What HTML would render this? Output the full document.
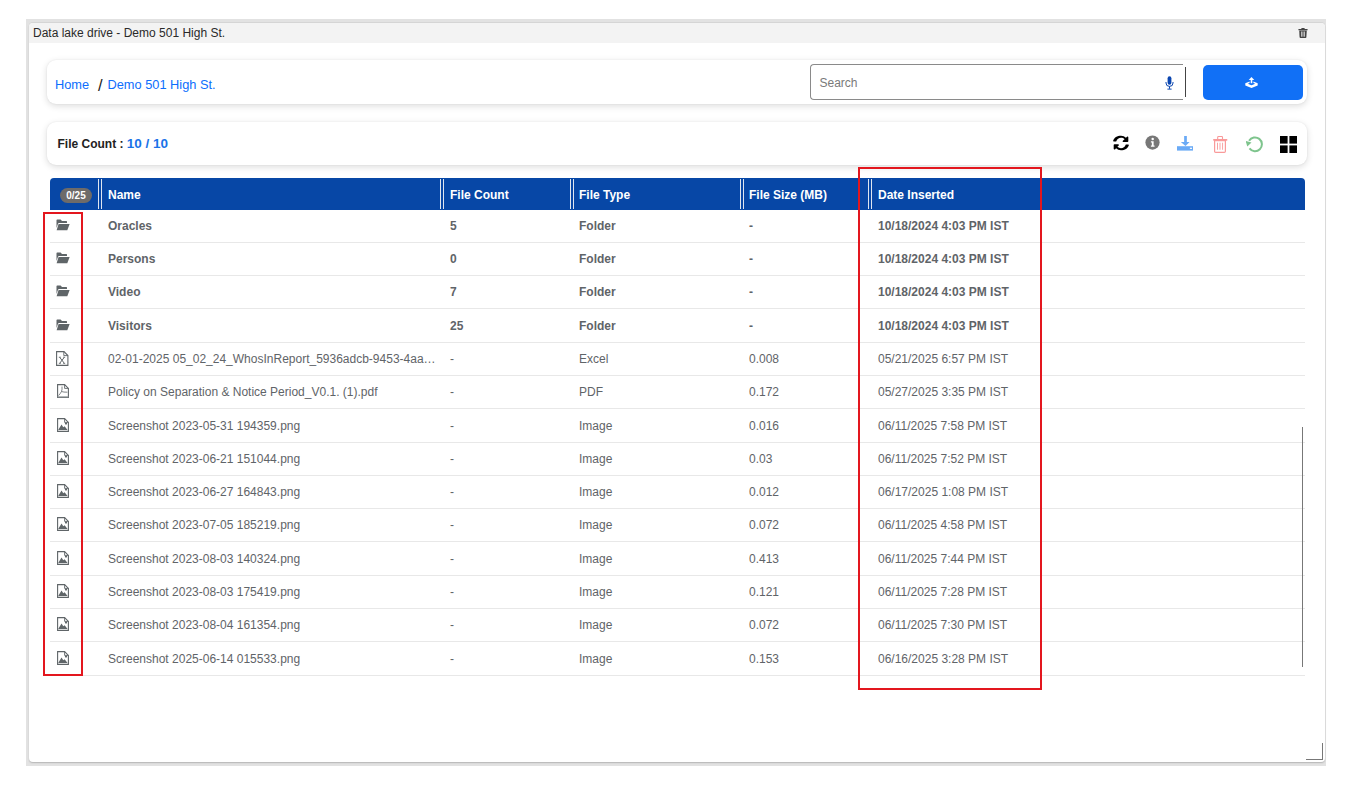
<!DOCTYPE html>
<html><head><meta charset="utf-8">
<style>
*{box-sizing:border-box;margin:0;padding:0}
html,body{width:1364px;height:786px;background:#fff;overflow:hidden;font-family:"Liberation Sans",sans-serif;position:relative}
.frame{position:absolute;left:26px;top:19px;width:1300px;height:747px;background:#e2e2e2}
.panel{position:absolute;left:3px;top:4px;width:1296px;height:739px;background:#fff;border-radius:4px;box-shadow:0 1px 1.5px rgba(0,0,0,.2),0 -1px 0 #d6d6d6}
.ttl{position:absolute;left:0;top:0;width:1296px;height:20px;background:#f3f3f3;border-radius:4px 4px 0 0;font-size:12px;color:#2a2a2a;line-height:21px;padding-left:4px}
.ttl .tr{position:absolute;left:1269px;top:5px}
.card{position:absolute;background:#fff;border-radius:9px;box-shadow:0 2px 7px rgba(0,0,0,.14),0 0 2px rgba(0,0,0,.07)}
.bc{left:47px;top:60px;width:1260px;height:44px}
.bc .t{position:absolute;top:17px;left:8px;font-size:12.8px;color:#0d6efd;white-space:nowrap;line-height:15px}
.bc .t .sl{color:#222;padding:0 5px 0 5.2px;font-size:16.5px;vertical-align:-2px;line-height:10px}
.search{position:absolute;left:763px;top:4px;width:373px;height:36px;border:1px solid #8a8a8a;border-right:none;border-radius:4px 0 0 4px}
.search .ph{position:absolute;left:8.5px;top:11px;font-size:12px;color:#7a7a7a}
.vbar{position:absolute;left:1138px;top:7px;width:1px;height:30px;background:#444}
.upl{position:absolute;left:1156px;top:5px;width:100px;height:35px;background:#1170f6;border-radius:5px}
.fc{left:47px;top:122px;width:1260px;height:43px}
.fc .t{position:absolute;left:10.5px;top:14px;font-size:12px;font-weight:bold;color:#222;white-space:nowrap}
.fc .t span{color:#1a73e8;font-size:13.5px}
.thead{position:absolute;left:50px;top:178px;width:1255px;height:32px;background:#0747a6;border-radius:4px 4px 0 0}
.th{position:absolute;top:0.5px;height:32px;color:#fff;font-weight:bold;font-size:12px;line-height:32px}
.dl{position:absolute;top:1px;width:4px;height:30px;border-left:1.2px solid #dfe6f0;border-right:1.2px solid #dfe6f0;margin-left:1px}
.badge{position:absolute;left:10px;top:9.5px;width:32px;height:15.5px;border-radius:8px;background:#6e6b69;color:#fff;font-size:10px;font-weight:bold;text-align:center;line-height:15.5px}
.row{position:absolute;left:50px;width:1255px;border-bottom:1px solid #e8e8e8}
.row .c{position:absolute;top:0;bottom:0;display:flex;align-items:center;font-size:12px;color:#5f6468;white-space:nowrap;padding-top:0px}
.row.b .c{font-weight:bold}
.row .ic{position:absolute;top:0;bottom:0;display:flex;align-items:center;justify-content:center;padding-bottom:2px}
.red{position:absolute;border:2px solid #e3161e}
.scroll{position:absolute;left:1302px;top:427px;width:1.2px;height:240px;background:#777}
.rz1{position:absolute;left:1322px;top:743px;width:1.2px;height:17px;background:#777}
.rz2{position:absolute;left:1306px;top:759px;width:17px;height:1.2px;background:#777}
</style></head><body>
<div class="frame"><div class="panel">
<div class="ttl">Data lake drive - Demo 501 High St.
<svg class="tr" width="10" height="10" viewBox="0 0 10 10"><rect x="3.3" y="0" width="3.4" height="1.4" rx="0.4" fill="#444"/><rect x="0.4" y="1" width="9.2" height="1.3" rx="0.3" fill="#444"/><path d="M1.2 2.6 H8.8 L8.4 9.2 Q8.3 9.9 7.6 9.9 H2.4 Q1.7 9.9 1.6 9.2 Z" fill="#444"/><rect x="3.3" y="3.5" width="1.1" height="5.2" fill="#f3f3f3"/><rect x="5.6" y="3.5" width="1.1" height="5.2" fill="#f3f3f3"/></svg>
</div>
</div></div>

<div class="card bc">
  <div class="t">Home <span class="sl">/</span>Demo 501 High St.</div>
  <div class="search"><div class="ph">Search</div>
    <svg style="position:absolute;left:354px;top:11px" width="9" height="14" viewBox="0 0 9 14"><rect x="2.6" y="0.3" width="3.8" height="8.4" rx="1.9" fill="#0b46b0"/><path d="M1 6 V7 Q1 10.4 4.5 10.4 Q8 10.4 8 7 V6" fill="none" stroke="#0b46b0" stroke-width="1"/><rect x="4" y="10.3" width="1" height="2.5" fill="#0b46b0"/><rect x="2.4" y="12.6" width="4.2" height="1" fill="#0b46b0"/></svg>
  </div>
  <div class="vbar"></div>
  <div class="upl">
    <svg style="position:absolute;left:42px;top:12px" width="13" height="11" viewBox="0 0 13 11"><path d="M6.5 0 L9.3 2.9 H7.3 V6.2 H5.7 V2.9 H3.7 Z" fill="#fff"/><path d="M4.6 4.6 L0.3 6.3 V8.6 L6.5 11 L12.7 8.6 V6.3 L8.4 4.6 V5.9 L10.2 6.7 L6.5 8.3 L2.8 6.7 L4.6 5.9 Z" fill="#fff"/></svg>
  </div>
</div>

<div class="card fc">
  <div class="t">File Count : <span>10 / 10</span></div>
  <!-- refresh -->
  <svg style="position:absolute;left:1066px;top:13px" width="16" height="16" viewBox="0 0 512 512"><path fill="#000" d="M370.7 133.3C339.5 104 299.9 88 256 88c-68.5 0-128.2 43.7-149.5 108.1-2.7 8.1-10.3 13.9-18.9 13.9H24c-12.4 0-21.8-11.3-19.5-23.5C31.8 86.6 135.1 24 256 24c61.2 0 116.8 24.1 157.6 63.4L449 52c15.1-15.1 41-4.4 41 17v134c0 13.3-10.7 24-24 24H332c-21.4 0-32.1-25.9-17-41l55.7-52.7zM32 296h134c21.4 0 32.1 25.9 17 41l-41.7 41.7C172.5 408 212.1 424 256 424c68.5 0 128.2-43.7 149.5-108.1 2.7-8.1 10.3-13.9 18.9-13.9H488c12.4 0 21.8 11.3 19.5 23.5C480.2 425.4 376.9 488 256 488c-61.2 0-116.8-24.1-157.6-63.4L63 460c-15.1 15.1-41 4.4-41-17V320c0-13.3 10.7-24 24-24z"/></svg>
  <!-- info -->
  <svg style="position:absolute;left:1098px;top:13px" width="15" height="15" viewBox="0 0 16 16"><circle cx="8" cy="8" r="7.6" fill="#777"/><circle cx="8.2" cy="4.2" r="1.3" fill="#fff"/><path d="M6.3 6.6 H9.2 V11.3 H10.2 V12.6 H6.3 V11.3 H7.3 V7.9 H6.3 Z" fill="#fff"/></svg>
  <!-- download -->
  <svg style="position:absolute;left:1130px;top:14px" width="16" height="15" viewBox="0 0 16 15"><path d="M7.15 0 H9.85 V6.1 H12.6 L8.5 9.9 L3.8 6.1 H7.15 Z" fill="#6aaaf6"/><path d="M0 10.2 H16 V14.6 H0 Z" fill="#6aaaf6"/><rect x="12.9" y="11.7" width="2.1" height="1.2" fill="#fff"/></svg>
  <!-- trash -->
  <svg style="position:absolute;left:1166px;top:14px" width="15" height="17" viewBox="0 0 15 17"><path d="M4.7 3 V1.3 Q4.7 0.55 5.45 0.55 H8.75 Q9.5 0.55 9.5 1.3 V3" fill="none" stroke="#f99a9a" stroke-width="1.1"/><rect x="0.1" y="3.1" width="14.3" height="1.6" rx="0.6" fill="#f99a9a"/><path d="M1.6 4.6 H12.4 V15.2 Q12.4 16.3 11.3 16.3 H2.7 Q1.6 16.3 1.6 15.2 Z" fill="none" stroke="#f99a9a" stroke-width="1.2"/><rect x="4.05" y="6.6" width="0.9" height="7.2" rx="0.4" fill="#f99a9a"/><rect x="6.55" y="6.6" width="0.9" height="7.2" rx="0.4" fill="#f99a9a"/><rect x="9.15" y="6.6" width="0.9" height="7.2" rx="0.4" fill="#f99a9a"/></svg>
  <!-- undo -->
  <svg style="position:absolute;left:1199px;top:14px" width="18" height="17" viewBox="0 0 18 17"><path d="M3.09 4.75 A6.9 6.9 0 1 1 3.49 12.45" fill="none" stroke="#7ec48d" stroke-width="2"/><path d="M-0.5 4.8 L5.5 6.5 L1.3 10.4 Z" fill="#7ec48d"/></svg>
  <!-- grid -->
  <svg style="position:absolute;left:1233px;top:14px" width="17" height="17" viewBox="0 0 17 17"><rect x="0" y="0" width="7.6" height="7.6" fill="#000"/><rect x="9.4" y="0" width="7.6" height="7.6" fill="#000"/><rect x="0" y="9.4" width="7.6" height="7.6" fill="#000"/><rect x="9.4" y="9.4" width="7.6" height="7.6" fill="#000"/></svg>
</div>

<div class="thead">
  <div class="badge">0/25</div>
  <div class="dl" style="left:47px"></div>
  <div class="th" style="left:58px">Name</div>
  <div class="dl" style="left:389px"></div>
  <div class="th" style="left:400px">File Count</div>
  <div class="dl" style="left:519px"></div>
  <div class="th" style="left:529px">File Type</div>
  <div class="dl" style="left:689px"></div>
  <div class="th" style="left:699px">File Size (MB)</div>
  <div class="dl" style="left:817px"></div>
  <div class="th" style="left:828px">Date Inserted</div>
</div>

<div class="row b" style="top:210px;height:33px"><div class="ic" style="left:0;width:26px"><svg width="14" height="12" viewBox="0 0 14 12"><path d="M0.5 1.2 Q0.5 0.5 1.2 0.5 L4.6 0.5 L6 2 L10.4 2 Q11 2 11 2.6 L11 4 L3 4 Q2.4 4 2.1 4.6 L0.5 9 Z" fill="#5f6568"/><path d="M2.6 5 L13.6 5 L11.3 11.3 L0.6 11.3 Z" fill="#5f6568"/></svg></div><div class="c" style="left:58px;width:330px">Oracles</div><div class="c" style="left:400px">5</div><div class="c" style="left:529px">Folder</div><div class="c" style="left:699px">-</div><div class="c" style="left:828px">10/18/2024 4:03 PM IST</div></div><div class="row b" style="top:243px;height:33px"><div class="ic" style="left:0;width:26px"><svg width="14" height="12" viewBox="0 0 14 12"><path d="M0.5 1.2 Q0.5 0.5 1.2 0.5 L4.6 0.5 L6 2 L10.4 2 Q11 2 11 2.6 L11 4 L3 4 Q2.4 4 2.1 4.6 L0.5 9 Z" fill="#5f6568"/><path d="M2.6 5 L13.6 5 L11.3 11.3 L0.6 11.3 Z" fill="#5f6568"/></svg></div><div class="c" style="left:58px;width:330px">Persons</div><div class="c" style="left:400px">0</div><div class="c" style="left:529px">Folder</div><div class="c" style="left:699px">-</div><div class="c" style="left:828px">10/18/2024 4:03 PM IST</div></div><div class="row b" style="top:276px;height:33px"><div class="ic" style="left:0;width:26px"><svg width="14" height="12" viewBox="0 0 14 12"><path d="M0.5 1.2 Q0.5 0.5 1.2 0.5 L4.6 0.5 L6 2 L10.4 2 Q11 2 11 2.6 L11 4 L3 4 Q2.4 4 2.1 4.6 L0.5 9 Z" fill="#5f6568"/><path d="M2.6 5 L13.6 5 L11.3 11.3 L0.6 11.3 Z" fill="#5f6568"/></svg></div><div class="c" style="left:58px;width:330px">Video</div><div class="c" style="left:400px">7</div><div class="c" style="left:529px">Folder</div><div class="c" style="left:699px">-</div><div class="c" style="left:828px">10/18/2024 4:03 PM IST</div></div><div class="row b" style="top:309px;height:34px"><div class="ic" style="left:0;width:26px"><svg width="14" height="12" viewBox="0 0 14 12"><path d="M0.5 1.2 Q0.5 0.5 1.2 0.5 L4.6 0.5 L6 2 L10.4 2 Q11 2 11 2.6 L11 4 L3 4 Q2.4 4 2.1 4.6 L0.5 9 Z" fill="#5f6568"/><path d="M2.6 5 L13.6 5 L11.3 11.3 L0.6 11.3 Z" fill="#5f6568"/></svg></div><div class="c" style="left:58px;width:330px">Visitors</div><div class="c" style="left:400px">25</div><div class="c" style="left:529px">Folder</div><div class="c" style="left:699px">-</div><div class="c" style="left:828px">10/18/2024 4:03 PM IST</div></div><div class="row" style="top:343px;height:33px"><div class="ic" style="left:0;width:26px"><svg style="margin-left:-2px" width="13" height="15" viewBox="0 0 13 15"><path d="M0.6 0.6 H8 L11.9 4.5 V14.4 H0.6 Z" fill="none" stroke="#5f6568" stroke-width="1.1"/><path d="M7.8 0.6 V4.6 H11.9" fill="none" stroke="#5f6568" stroke-width="0.9"/><path d="M3.6 6.2 L8.4 12.4 M8.4 6.2 L3.6 12.4" stroke="#5f6568" stroke-width="1"/><path d="M2.8 6.2 H5 M7 6.2 H9.2 M2.8 12.4 H5 M7 12.4 H9.2" stroke="#5f6568" stroke-width="0.7"/></svg></div><div class="c" style="left:58px;width:330px">02-01-2025 05_02_24_WhosInReport_5936adcb-9453-4aa…</div><div class="c" style="left:400px">-</div><div class="c" style="left:529px">Excel</div><div class="c" style="left:699px">0.008</div><div class="c" style="left:828px">05/21/2025 6:57 PM IST</div></div><div class="row" style="top:376px;height:33px"><div class="ic" style="left:0;width:26px"><svg width="12" height="14" viewBox="0 0 12 14"><path d="M0.6 0.6 H7.6 L11.4 4.4 V13.4 H0.6 Z" fill="none" stroke="#5f6568" stroke-width="1.1"/><path d="M7.6 0.6 V4.4 H11.4" fill="none" stroke="#5f6568" stroke-width="0.9"/><path d="M1.6 11.5 Q3.5 9.5 4.5 7.5 Q5.3 5.5 5 2.5 M4.5 7.5 Q6.5 8.3 10.4 8.2" fill="none" stroke="#5f6568" stroke-width="0.8"/><rect x="0.6" y="12.4" width="10.8" height="1" fill="#9aa0a3"/></svg></div><div class="c" style="left:58px;width:330px">Policy on Separation &amp; Notice Period_V0.1. (1).pdf</div><div class="c" style="left:400px">-</div><div class="c" style="left:529px">PDF</div><div class="c" style="left:699px">0.172</div><div class="c" style="left:828px">05/27/2025 3:35 PM IST</div></div><div class="row" style="top:409px;height:34px"><div class="ic" style="left:0;width:26px"><svg width="12" height="14" viewBox="0 0 12 14"><path d="M0.6 0.6 H7.6 L11.4 4.4 V13.4 H0.6 Z" fill="none" stroke="#5f6568" stroke-width="1.1"/><path d="M7.6 0.6 V4.4 H11.4" fill="none" stroke="#5f6568" stroke-width="0.9"/><path d="M1.2 12 L4.5 6.4 L6.3 9.2 L7.6 8.2 L10.6 12 Z" fill="#5f6568"/><circle cx="9" cy="5.6" r="1.1" fill="#5f6568"/></svg></div><div class="c" style="left:58px;width:330px">Screenshot 2023-05-31 194359.png</div><div class="c" style="left:400px">-</div><div class="c" style="left:529px">Image</div><div class="c" style="left:699px">0.016</div><div class="c" style="left:828px">06/11/2025 7:58 PM IST</div></div><div class="row" style="top:443px;height:33px"><div class="ic" style="left:0;width:26px"><svg width="12" height="14" viewBox="0 0 12 14"><path d="M0.6 0.6 H7.6 L11.4 4.4 V13.4 H0.6 Z" fill="none" stroke="#5f6568" stroke-width="1.1"/><path d="M7.6 0.6 V4.4 H11.4" fill="none" stroke="#5f6568" stroke-width="0.9"/><path d="M1.2 12 L4.5 6.4 L6.3 9.2 L7.6 8.2 L10.6 12 Z" fill="#5f6568"/><circle cx="9" cy="5.6" r="1.1" fill="#5f6568"/></svg></div><div class="c" style="left:58px;width:330px">Screenshot 2023-06-21 151044.png</div><div class="c" style="left:400px">-</div><div class="c" style="left:529px">Image</div><div class="c" style="left:699px">0.03</div><div class="c" style="left:828px">06/11/2025 7:52 PM IST</div></div><div class="row" style="top:476px;height:33px"><div class="ic" style="left:0;width:26px"><svg width="12" height="14" viewBox="0 0 12 14"><path d="M0.6 0.6 H7.6 L11.4 4.4 V13.4 H0.6 Z" fill="none" stroke="#5f6568" stroke-width="1.1"/><path d="M7.6 0.6 V4.4 H11.4" fill="none" stroke="#5f6568" stroke-width="0.9"/><path d="M1.2 12 L4.5 6.4 L6.3 9.2 L7.6 8.2 L10.6 12 Z" fill="#5f6568"/><circle cx="9" cy="5.6" r="1.1" fill="#5f6568"/></svg></div><div class="c" style="left:58px;width:330px">Screenshot 2023-06-27 164843.png</div><div class="c" style="left:400px">-</div><div class="c" style="left:529px">Image</div><div class="c" style="left:699px">0.012</div><div class="c" style="left:828px">06/17/2025 1:08 PM IST</div></div><div class="row" style="top:509px;height:33px"><div class="ic" style="left:0;width:26px"><svg width="12" height="14" viewBox="0 0 12 14"><path d="M0.6 0.6 H7.6 L11.4 4.4 V13.4 H0.6 Z" fill="none" stroke="#5f6568" stroke-width="1.1"/><path d="M7.6 0.6 V4.4 H11.4" fill="none" stroke="#5f6568" stroke-width="0.9"/><path d="M1.2 12 L4.5 6.4 L6.3 9.2 L7.6 8.2 L10.6 12 Z" fill="#5f6568"/><circle cx="9" cy="5.6" r="1.1" fill="#5f6568"/></svg></div><div class="c" style="left:58px;width:330px">Screenshot 2023-07-05 185219.png</div><div class="c" style="left:400px">-</div><div class="c" style="left:529px">Image</div><div class="c" style="left:699px">0.072</div><div class="c" style="left:828px">06/11/2025 4:58 PM IST</div></div><div class="row" style="top:542px;height:34px"><div class="ic" style="left:0;width:26px"><svg width="12" height="14" viewBox="0 0 12 14"><path d="M0.6 0.6 H7.6 L11.4 4.4 V13.4 H0.6 Z" fill="none" stroke="#5f6568" stroke-width="1.1"/><path d="M7.6 0.6 V4.4 H11.4" fill="none" stroke="#5f6568" stroke-width="0.9"/><path d="M1.2 12 L4.5 6.4 L6.3 9.2 L7.6 8.2 L10.6 12 Z" fill="#5f6568"/><circle cx="9" cy="5.6" r="1.1" fill="#5f6568"/></svg></div><div class="c" style="left:58px;width:330px">Screenshot 2023-08-03 140324.png</div><div class="c" style="left:400px">-</div><div class="c" style="left:529px">Image</div><div class="c" style="left:699px">0.413</div><div class="c" style="left:828px">06/11/2025 7:44 PM IST</div></div><div class="row" style="top:576px;height:33px"><div class="ic" style="left:0;width:26px"><svg width="12" height="14" viewBox="0 0 12 14"><path d="M0.6 0.6 H7.6 L11.4 4.4 V13.4 H0.6 Z" fill="none" stroke="#5f6568" stroke-width="1.1"/><path d="M7.6 0.6 V4.4 H11.4" fill="none" stroke="#5f6568" stroke-width="0.9"/><path d="M1.2 12 L4.5 6.4 L6.3 9.2 L7.6 8.2 L10.6 12 Z" fill="#5f6568"/><circle cx="9" cy="5.6" r="1.1" fill="#5f6568"/></svg></div><div class="c" style="left:58px;width:330px">Screenshot 2023-08-03 175419.png</div><div class="c" style="left:400px">-</div><div class="c" style="left:529px">Image</div><div class="c" style="left:699px">0.121</div><div class="c" style="left:828px">06/11/2025 7:28 PM IST</div></div><div class="row" style="top:609px;height:33px"><div class="ic" style="left:0;width:26px"><svg width="12" height="14" viewBox="0 0 12 14"><path d="M0.6 0.6 H7.6 L11.4 4.4 V13.4 H0.6 Z" fill="none" stroke="#5f6568" stroke-width="1.1"/><path d="M7.6 0.6 V4.4 H11.4" fill="none" stroke="#5f6568" stroke-width="0.9"/><path d="M1.2 12 L4.5 6.4 L6.3 9.2 L7.6 8.2 L10.6 12 Z" fill="#5f6568"/><circle cx="9" cy="5.6" r="1.1" fill="#5f6568"/></svg></div><div class="c" style="left:58px;width:330px">Screenshot 2023-08-04 161354.png</div><div class="c" style="left:400px">-</div><div class="c" style="left:529px">Image</div><div class="c" style="left:699px">0.072</div><div class="c" style="left:828px">06/11/2025 7:30 PM IST</div></div><div class="row" style="top:642px;height:34px"><div class="ic" style="left:0;width:26px"><svg width="12" height="14" viewBox="0 0 12 14"><path d="M0.6 0.6 H7.6 L11.4 4.4 V13.4 H0.6 Z" fill="none" stroke="#5f6568" stroke-width="1.1"/><path d="M7.6 0.6 V4.4 H11.4" fill="none" stroke="#5f6568" stroke-width="0.9"/><path d="M1.2 12 L4.5 6.4 L6.3 9.2 L7.6 8.2 L10.6 12 Z" fill="#5f6568"/><circle cx="9" cy="5.6" r="1.1" fill="#5f6568"/></svg></div><div class="c" style="left:58px;width:330px">Screenshot 2025-06-14 015533.png</div><div class="c" style="left:400px">-</div><div class="c" style="left:529px">Image</div><div class="c" style="left:699px">0.153</div><div class="c" style="left:828px">06/16/2025 3:28 PM IST</div></div>

<div class="scroll"></div>
<div class="red" style="left:43px;top:212px;width:40px;height:464px"></div>
<div class="red" style="left:858px;top:167px;width:184px;height:523px"></div>
<div class="rz1"></div><div class="rz2"></div>
</body></html>
